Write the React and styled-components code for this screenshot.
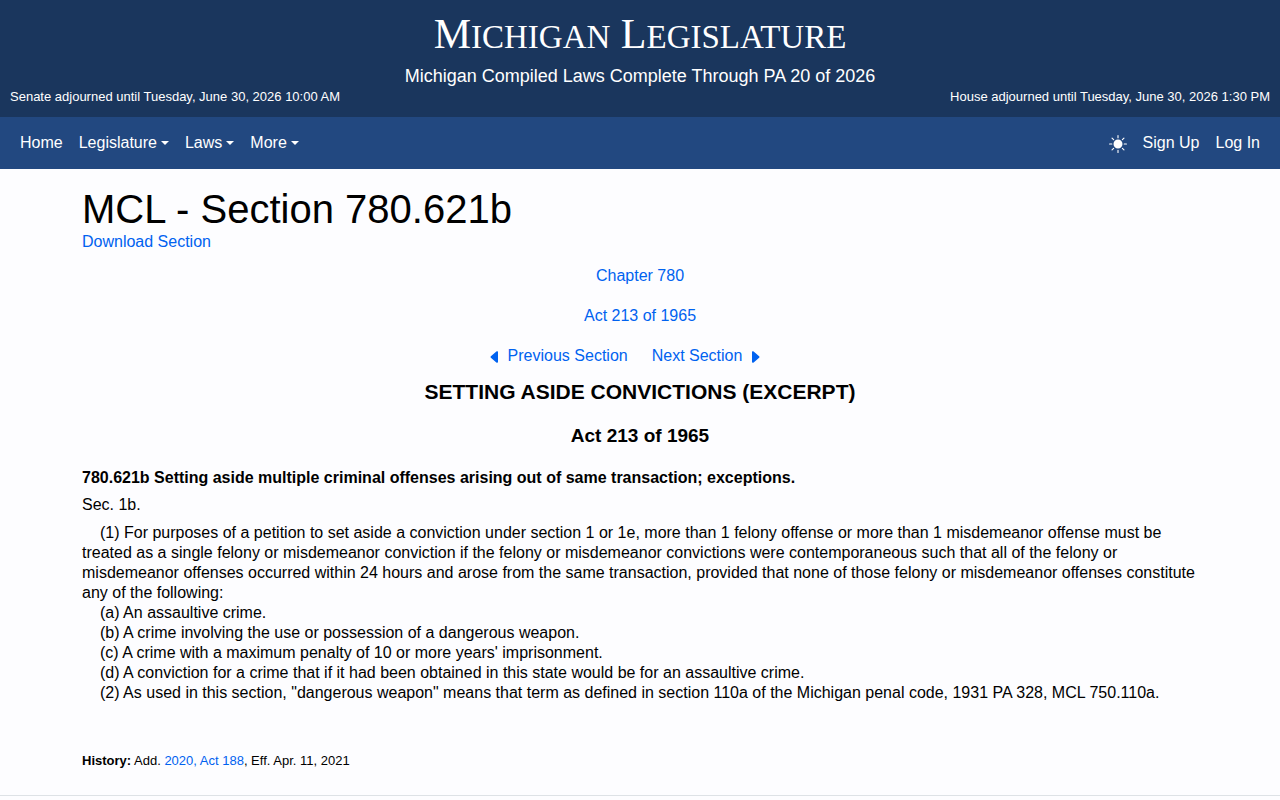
import styled, { createGlobalStyle } from "styled-components";
import { BsCaretLeftFill, BsCaretRightFill, BsSunFill } from "react-icons/bs";

const paragraphs = [
  "(1) For purposes of a petition to set aside a conviction under section 1 or 1e, more than 1 felony offense or more than 1 misdemeanor offense must be treated as a single felony or misdemeanor conviction if the felony or misdemeanor convictions were contemporaneous such that all of the felony or misdemeanor offenses occurred within 24 hours and arose from the same transaction, provided that none of those felony or misdemeanor offenses constitute any of the following:",
  "(a) An assaultive crime.",
  "(b) A crime involving the use or possession of a dangerous weapon.",
  "(c) A crime with a maximum penalty of 10 or more years' imprisonment.",
  "(d) A conviction for a crime that if it had been obtained in this state would be for an assaultive crime.",
  '(2) As used in this section, "dangerous weapon" means that term as defined in section 110a of the Michigan penal code, 1931 PA 328, MCL 750.110a.',
];

const menus = ["Legislature", "Laws", "More"];

const Header = () => {
  return (
    <StyledHeader>
      <StyledSiteTitle>
        <StyledTitleWord>Michigan</StyledTitleWord> <StyledTitleWord>Legislature</StyledTitleWord>
      </StyledSiteTitle>
      <StyledThrough>Michigan Compiled Laws Complete Through PA 20 of 2026</StyledThrough>
      <StyledSessions>
        <span>Senate adjourned until Tuesday, June 30, 2026 10:00 AM</span>
        <span>House adjourned until Tuesday, June 30, 2026 1:30 PM</span>
      </StyledSessions>
    </StyledHeader>
  );
};

const Navbar = () => {
  return (
    <StyledNav>
      <StyledNavGroup>
        <StyledNavLink href="#">Home</StyledNavLink>
        {menus.map((menu) => (
          <StyledNavButton key={menu} type="button" aria-haspopup="true">
            {menu}
            <StyledCaret />
          </StyledNavButton>
        ))}
      </StyledNavGroup>
      <StyledNavGroup>
        <StyledThemeButton type="button" aria-label="Toggle theme">
          <BsSunFill size={18} />
        </StyledThemeButton>
        <StyledNavLink href="#">Sign Up</StyledNavLink>
        <StyledNavLink href="#">Log In</StyledNavLink>
      </StyledNavGroup>
    </StyledNav>
  );
};

const Section = () => {
  return (
    <StyledMain>
      <StyledPageTitle>MCL - Section 780.621b</StyledPageTitle>
      <StyledDownload>
        <StyledLink href="#">Download Section</StyledLink>
      </StyledDownload>
      <StyledParents>
        <StyledLink href="#">Chapter 780</StyledLink>
        <StyledLink href="#">Act 213 of 1965</StyledLink>
        <StyledPager>
          <StyledPagerLink href="#">
            <BsCaretLeftFill size={16} />
            Previous Section
          </StyledPagerLink>
          <StyledPagerLink href="#">
            Next Section
            <BsCaretRightFill size={16} />
          </StyledPagerLink>
        </StyledPager>
      </StyledParents>
      <StyledActTitle>SETTING ASIDE CONVICTIONS (EXCERPT)</StyledActTitle>
      <StyledActNumber>Act 213 of 1965</StyledActNumber>
      <StyledCatchline>
        780.621b Setting aside multiple criminal offenses arising out of same transaction; exceptions.
      </StyledCatchline>
      <StyledSectionLabel>Sec. 1b.</StyledSectionLabel>
      {paragraphs.map((text) => (
        <StyledParagraph key={text}>{text}</StyledParagraph>
      ))}
      <StyledHistory>
        <b>History:</b> Add. <StyledLink href="#">2020, Act 188</StyledLink>, Eff. Apr. 11, 2021
      </StyledHistory>
    </StyledMain>
  );
};

export default function App() {
  return (
    <>
      <GlobalStyle />
      <Header />
      <Navbar />
      <Section />
      <StyledFooter />
    </>
  );
}

const GlobalStyle = createGlobalStyle`
  * {
    box-sizing: border-box;
  }

  body {
    margin: 0;
    background: #fdfdff;
    color: #000;
    font-family: "Liberation Sans", Arial, sans-serif;
    font-size: 16px;
    line-height: 20px;
  }
`;

const StyledHeader = styled.header`
  padding: 10px;
  background: #1a365d;
  color: #fff;
  text-align: center;
`;

const StyledSiteTitle = styled.div`
  height: 48px;
  font-family: "Liberation Serif", serif;
  font-size: 42px;
  line-height: 48px;
`;

const StyledTitleWord = styled.span`
  display: inline-block;
  font-size: 33px;
  text-transform: uppercase;

  &::first-letter {
    font-size: 42px;
  }
`;

const StyledThrough = styled.div`
  margin-top: 8px;
  font-size: 18px;
`;

const StyledSessions = styled.div`
  display: flex;
  justify-content: space-between;
  margin-top: 1px;
  font-size: 13px;
`;

const StyledNav = styled.nav`
  display: flex;
  justify-content: space-between;
  padding: 8px 12px;
  background: #224880;
`;

const StyledNavGroup = styled.div`
  display: flex;
  align-items: center;
`;

const StyledNavLink = styled.a`
  padding: 8px;
  color: #fff;
  text-decoration: none;
`;

const StyledNavButton = styled.button`
  display: flex;
  align-items: center;
  gap: 4px;
  padding: 8px;
  border: 0;
  background: none;
  color: #fff;
  font: inherit;
`;

const StyledCaret = styled.span`
  border-top: 4px solid;
  border-right: 4px solid transparent;
  border-left: 4px solid transparent;
`;

const StyledThemeButton = styled(StyledNavButton)`
  padding: 10px 8px 8px;
`;

const StyledMain = styled.main`
  max-width: 1140px;
  margin: 0 auto;
  padding: 16px 12px;
`;

const StyledPageTitle = styled.h1`
  margin: 0;
  font-size: 40px;
  font-weight: 400;
  line-height: 48px;
`;

const StyledLink = styled.a`
  color: #0062f0;
  text-decoration: none;
`;

const StyledDownload = styled.div`
  line-height: 18px;
`;

const StyledParents = styled.div`
  display: flex;
  flex-direction: column;
  align-items: center;
  gap: 20px;
  margin-top: 15px;
`;

const StyledPager = styled.div`
  display: flex;
  gap: 24px;
  padding-right: 30px;
`;

const StyledPagerLink = styled(StyledLink)`
  display: flex;
  align-items: center;
  gap: 5px;

  svg {
    margin-top: 2px;
  }
`;

const StyledActTitle = styled.h2`
  margin: 14px 0 0;
  font-size: 21px;
  line-height: 24px;
  text-align: center;
`;

const StyledActNumber = styled.h3`
  margin: 20px 0 0;
  font-size: 19px;
  line-height: 24px;
  text-align: center;
`;

const StyledCatchline = styled.p`
  margin: 20px 0 0;
  font-weight: 700;
`;

const StyledSectionLabel = styled.p`
  margin: 7px 0 8px;
`;

const StyledParagraph = styled.p`
  margin: 0;
  text-indent: 18px;
`;

const StyledHistory = styled.p`
  margin: 48px 0 0;
  font-size: 13px;
`;

const StyledFooter = styled.footer`
  margin-top: 8px;
  border-top: 1px solid #dee2e6;
`;
